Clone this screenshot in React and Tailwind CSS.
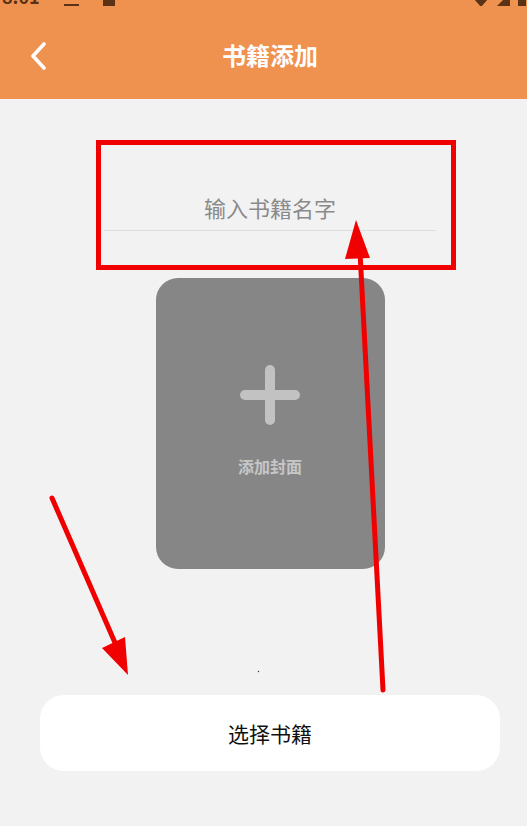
import React from 'react';

const font = { fontFamily: '"Noto Sans CJK SC", "Noto Sans", sans-serif' };

function Annotations() {
    // red markup drawn over the screenshot
    return (
        <svg className="absolute inset-0 pointer-events-none" width="527" height="826" viewBox="0 0 527 826">
            <rect x="98.5" y="142.5" width="355" height="125" fill="none" stroke="#f00000" strokeWidth="5"/>
            <line x1="383" y1="690" x2="360" y2="252" stroke="#f00000" strokeWidth="5" strokeLinecap="round"/>
            <polygon points="356,220 345,259 370,258" fill="#f00000"/>
            <line x1="52" y1="498" x2="116" y2="645" stroke="#f00000" strokeWidth="5" strokeLinecap="round"/>
            <polygon points="128,675 102,648 125,637" fill="#f00000"/>
            <circle cx="258.5" cy="671.5" r="0.7" fill="#333"/>
        </svg>
    );
}

export default function App() {
    return (
        <div className="relative w-[527px] h-[826px] overflow-hidden bg-[#f2f2f2]" style={font}>
            <div className="w-[540px]">
                <header className="h-[99px] bg-[#ef914f] flex flex-col">
                    <div className="h-[6px] overflow-hidden">
                        <div className="-mt-[17px] flex items-center justify-between text-[#5b3216] text-[18px] font-semibold">
                            <div className="flex items-center gap-6 pl-[2px]">
                                <span>8:01</span>
                                <span className="w-[15px] h-[20px] border-b-[3px] border-[#5b3216]"></span>
                                <span className="w-[12px] h-[20px] bg-[#5b3216]"></span>
                            </div>
                            <div className="flex items-end gap-2 pr-[14px]">
                                <svg width="14" height="20" viewBox="0 0 14 20"><path d="M0 12 L14 12 L7 20 Z" fill="#5b3216"/></svg>
                                <svg width="14" height="20" viewBox="0 0 14 20"><path d="M14 6 L14 20 L0 20 Z" fill="#5b3216"/></svg>
                                <span className="w-[8px] h-[20px] bg-[#5b3216]"></span>
                            </div>
                        </div>
                    </div>
                    <div className="flex-1 flex items-center relative">
                        <div className="absolute left-[29px] top-[36px]">
                            <svg width="18" height="28" viewBox="0 0 18 28" fill="none">
                                <path d="M15 2 L4 14 L15 26" stroke="white" strokeWidth="3.6" strokeLinecap="round" strokeLinejoin="round"/>
                            </svg>
                        </div>
                        <h1 className="w-full text-center text-white text-[24px] font-bold pt-[4px]">书籍添加</h1>
                    </div>
                </header>

                <main className="flex flex-col items-center">
                    <div className="mt-[88px] w-[332px] h-[44px] border-b border-[#dedede] flex items-end justify-center pb-[12px]">
                        <span className="text-[22px] leading-none text-[#8a8a8a]">输入书籍名字</span>
                    </div>

                    <div className="mt-[47px] w-[229px] h-[291px] rounded-[22px] bg-[#868686] flex flex-col items-center">
                        <svg className="mt-[86px]" width="62" height="62" viewBox="0 0 62 62">
                            <path d="M31 6 V56 M6 31 H56" stroke="#c2c2c2" strokeWidth="10" strokeLinecap="round"/>
                        </svg>
                        <span className="mt-[32px] text-[16px] font-bold text-[#c6c6c6] leading-none">添加封面</span>
                    </div>

                    <div className="mt-[126px] w-[460px] h-[76px] rounded-[24px] bg-white flex items-center justify-center">
                        <span className="text-[21px] text-[#111] pt-[2px]">选择书籍</span>
                    </div>
                </main>
            </div>
            <Annotations/>
        </div>
    );
}
